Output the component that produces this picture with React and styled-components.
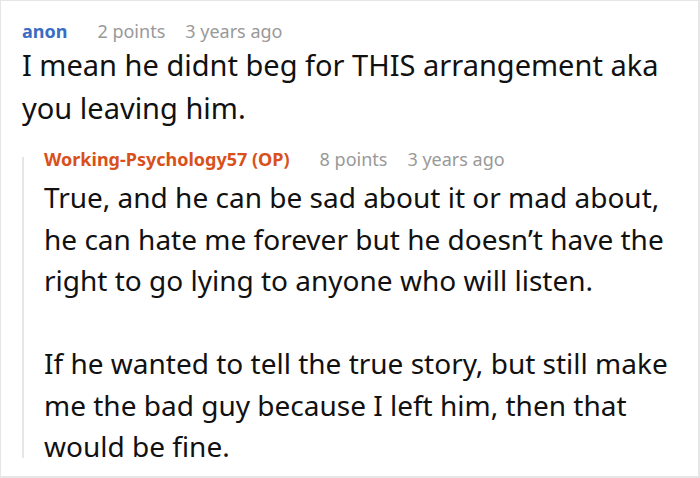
import React from 'react';
import styled, { createGlobalStyle } from 'styled-components';

const GlobalStyle = createGlobalStyle`
    html, body {
        margin: 0;
        padding: 0;
        background: #ffffff;
    }
    body {
        font-family: "Noto Sans", "DejaVu Sans", sans-serif;
    }
`;

const Frame = styled.div`
    width: 700px;
    height: 478px;
    box-sizing: border-box;
    border-style: solid;
    border-color: #e6e6e6;
    border-width: 1px 2px 2px 1px;
    padding: 18px 20px 0 21px;
    overflow: hidden;
    background: #fff;
`;

const Header = styled.div`
    display: flex;
    align-items: baseline;
    font-size: 18px;
    line-height: 24px;
    color: #999999;
`;

const Author = styled.span`
    font-weight: 700;
    color: ${props => props.op ? "#d9501b" : "#3b6cc4"};
    margin-right: 30px;
`;

const Points = styled.span`
    margin-right: 20px;
`;

const Body = styled.div`
    font-size: ${props => props.size}px;
    line-height: ${props => props.lh}px;
    color: #111111;
    margin-top: ${props => props.gap}px;
`;

const Paragraph = styled.p`
    margin: 0;
    & + & {
        margin-top: ${props => props.lh}px;
    }
`;

const Reply = styled.div`
    display: flex;
    margin-top: 18px;
`;

const Thread = styled.div`
    width: 2px;
    background: #e6e6e6;
    margin: 10px 20px 10px 0;
    flex-shrink: 0;
`;

const ReplyContent = styled.div`
    flex: 1;
`;

function Comment({author, op, points, age, paragraphs, size, lh, gap}) {
    return <div>
        <Header>
            <Author op={op}>{author}</Author>
            <Points>{points}</Points>
            <span>{age}</span>
        </Header>
        <Body size={size} lh={lh} gap={gap}>
            {paragraphs.map((p, i) => <Paragraph key={i} lh={lh}>{p}</Paragraph>)}
        </Body>
    </div>;
}

export default function App() {
    return <>
        <GlobalStyle />
        <Frame>
            <Comment
                author="anon"
                points="2 points"
                age="3 years ago"
                size={29}
                lh={43}
                gap={0}
                paragraphs={["I mean he didnt beg for THIS arrangement aka you leaving him."]}
            />
            <Reply>
                <Thread />
                <ReplyContent>
                    <Comment
                        author="Working-Psychology57 (OP)"
                        op
                        points="8 points"
                        age="3 years ago"
                        size={28}
                        lh={41.5}
                        gap={6}
                        paragraphs={[
                            "True, and he can be sad about it or mad about, he can hate me forever but he doesn’t have the right to go lying to anyone who will listen.",
                            "If he wanted to tell the true story, but still make me the bad guy because I left him, then that would be fine.",
                        ]}
                    />
                </ReplyContent>
            </Reply>
        </Frame>
    </>;
}
